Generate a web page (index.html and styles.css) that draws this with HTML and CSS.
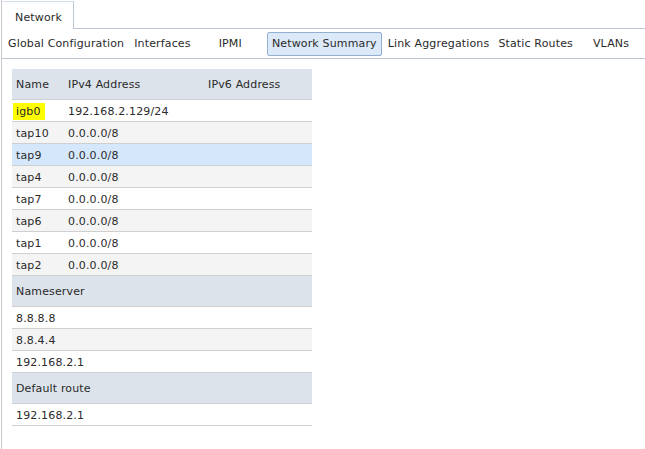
FILE: index.html
```html
<!DOCTYPE html>
<html>
<head>
<meta charset="utf-8">
<link rel="stylesheet" href="styles.css">
</head>
<body>
<div class="page">
  <div class="tabs">
    <div class="tab">Network</div>
  </div>
  <div class="nav">
    <span class="nav-item gc">Global Configuration</span>
    <span class="nav-item ifc">Interfaces</span>
    <span class="nav-item ipmi">IPMI</span>
    <span class="nav-item active">Network Summary</span>
    <span class="nav-item la">Link Aggregations</span>
    <span class="nav-item sr">Static Routes</span>
    <span class="nav-item vl">VLANs</span>
  </div>
  <div class="main">
    <table class="summary">
      <colgroup><col class="c1"><col class="c2"><col class="c3"></colgroup>
      <tr class="head"><td>Name</td><td>IPv4 Address</td><td>IPv6 Address</td></tr>
      <tr class="odd"><td><span class="hl">igb0</span></td><td>192.168.2.129/24</td><td></td></tr>
      <tr class="even"><td>tap10</td><td>0.0.0.0/8</td><td></td></tr>
      <tr class="hover"><td>tap9</td><td>0.0.0.0/8</td><td></td></tr>
      <tr class="even"><td>tap4</td><td>0.0.0.0/8</td><td></td></tr>
      <tr class="odd"><td>tap7</td><td>0.0.0.0/8</td><td></td></tr>
      <tr class="even"><td>tap6</td><td>0.0.0.0/8</td><td></td></tr>
      <tr class="odd"><td>tap1</td><td>0.0.0.0/8</td><td></td></tr>
      <tr class="even"><td>tap2</td><td>0.0.0.0/8</td><td></td></tr>
      <tr class="head"><td colspan="3">Nameserver</td></tr>
      <tr class="odd"><td colspan="3">8.8.8.8</td></tr>
      <tr class="even"><td colspan="3">8.8.4.4</td></tr>
      <tr class="odd"><td colspan="3">192.168.2.1</td></tr>
      <tr class="head"><td colspan="3">Default route</td></tr>
      <tr class="odd"><td colspan="3">192.168.2.1</td></tr>
    </table>
  </div>
</div>
</body>
</html>
```
FILE: styles.css
```css
html, body {
  margin: 0;
  padding: 0;
  background: #fff;
}
body {
  font-family: "DejaVu Sans", Verdana, sans-serif;
  font-size: 11px;
  letter-spacing: 0.15px;
  color: #2a2a2a;
}
.page {
  margin-left: 1px;
  border-left: 1px solid #c9c9c9;
  min-height: 449px;
  box-sizing: border-box;
}
.tabs {
  display: flex;
  height: 28px;
  border-bottom: 1px solid #bcc5d0;
}
.tab {
  width: 72px;
  box-sizing: border-box;
  margin-top: 1px;
  border-top: 1px solid #d5dde8;
  border-right: 1px solid #bcc5d0;
  background: #fff;
  padding: 9px 0 0 13px;
  margin-bottom: -1px;
  height: 28px;
}
.nav {
  display: flex;
  align-items: center;
  height: 29px;
  border-bottom: 1px solid #bcc5d0;
}
.nav-item {
  white-space: nowrap;
}
.gc { margin-left: 6px; }
.ifc { margin-left: 10px; }
.ipmi { margin-left: 28px; }
.active {
  margin-left: 25px;
  padding: 4px 4px 5px 4px;
  background: #dbe9f8;
  border: 1px solid #92b0cf;
  border-radius: 2px;
}
.la { margin-left: 6px; }
.sr { margin-left: 9px; }
.vl { margin-left: 20px; }
.main {
  padding: 10px 0 0 10px;
}
.summary {
  width: 300px;
  border-collapse: collapse;
  table-layout: fixed;
}
.c1 { width: 52px; }
.c2 { width: 140px; }
.c3 { width: 108px; }
.summary td {
  padding: 1px 0 0 4px;
  height: 20px;
  border-bottom: 1px solid #cfcfcf;
  white-space: nowrap;
  vertical-align: middle;
}
.summary tr.head td {
  height: 29px;
  background: #dce3ea;
}
.summary tr.odd td { background: #fff; }
.summary tr.even td { background: #f4f4f4; }
.summary tr.hover td { background: #d5e8fb; }
.hl {
  background: #ffff00;
  margin-left: -3px;
  padding: 2px 4px 2px 3px;
}
```
